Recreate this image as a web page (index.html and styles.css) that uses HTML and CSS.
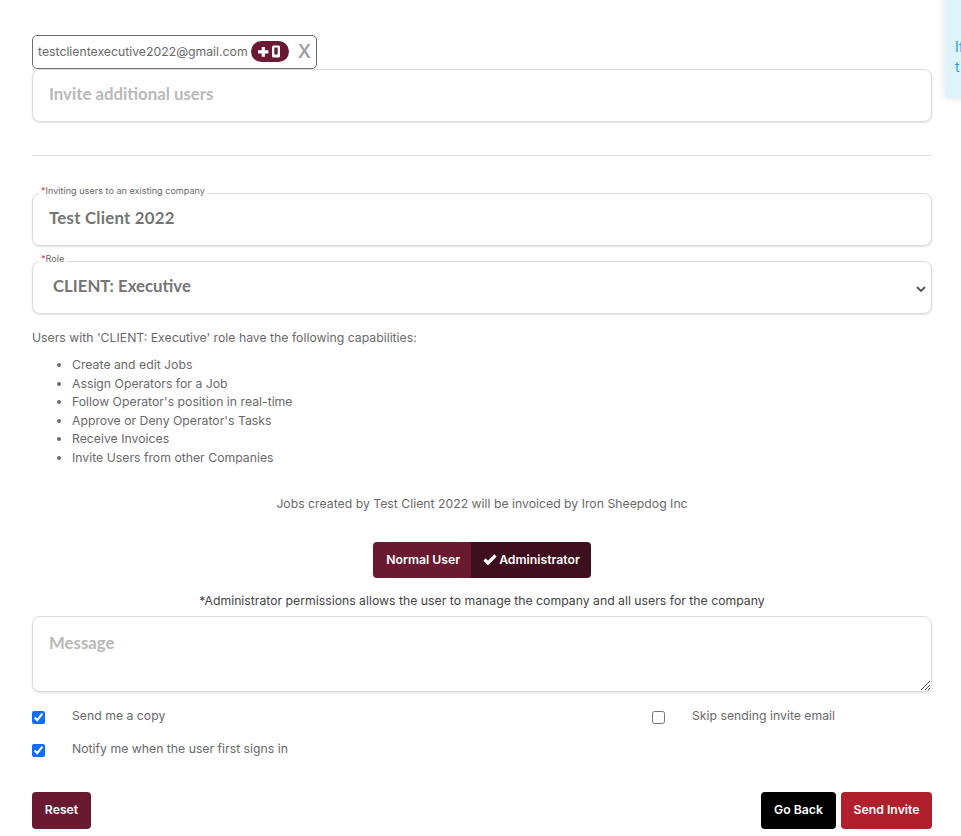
FILE: index.html
```html
<!DOCTYPE html>
<html lang="en">
<head>
<meta charset="utf-8">
<title>Invite users</title>
<link rel="stylesheet" href="styles.css">
</head>
<body>
<aside class="notice"><p>If</p><p>t</p></aside>
<main class="page">
  <div class="chip">
    <span class="chip-email">testclientexecutive2022@gmail.com</span>
    <span class="chip-badge">
      <svg width="30" height="16" viewBox="0 0 30 16"><path d="M6.700 3h3.200v3.200h3.500v3.200H9.900v3.300H6.700V9.400H3V6.200h3.700z" fill="#fff"/><path fill-rule="evenodd" d="M18.500 1.500h5a1.500 1.500 0 0 1 1.500 1.500v9a1.500 1.500 0 0 1-1.500 1.500h-5A1.500 1.500 0 0 1 17 12V3a1.500 1.500 0 0 1 1.500-1.500zm.8 2v7h3.400v-7z" fill="#fff"/></svg>
    </span>
    <span class="chip-x">X</span>
  </div>
  <div class="field field-first"><span class="placeholder">Invite additional users</span></div>
  <hr class="rule">
  <div class="field field-labelled">
    <span class="legend"><b>*</b>Inviting users to an existing company</span>
    <span class="value value-company">Test Client 2022</span>
  </div>
  <div class="field field-select">
    <span class="legend"><b>*</b>Role</span>
    <span class="value">CLIENT: Executive</span>
    <svg class="chevron" width="10" height="6" viewBox="0 0 10 6"><path d="M1 1l4 4 4-4" fill="none" stroke="#555" stroke-width="1.800"/></svg>
  </div>
  <p class="caps-intro">Users with 'CLIENT: Executive' role have the following capabilities:</p>
  <ul class="caps">
    <li>Create and edit Jobs</li>
    <li>Assign Operators for a Job</li>
    <li>Follow Operator's position in real-time</li>
    <li>Approve or Deny Operator's Tasks</li>
    <li>Receive Invoices</li>
    <li>Invite Users from other Companies</li>
  </ul>
  <p class="invoice-note">Jobs created by Test Client 2022 will be invoiced by Iron Sheepdog Inc</p>
  <div class="toggle-row">
    <div class="toggle">
      <span class="toggle-btn">Normal User</span>
      <span class="toggle-btn toggle-on"><svg width="14" height="11" viewBox="0 0 14 11"><path d="M1.500 5.500l3.500 3.500 7.500-7.500" fill="none" stroke="#fff" stroke-width="3.200"/></svg>Administrator</span>
    </div>
  </div>
  <p class="perm-note">*Administrator permissions allows the user to manage the company and all users for the company</p>
  <div class="field field-message">
    <span class="placeholder">Message</span>
    <svg class="grip" width="9" height="9" viewBox="0 0 9 9"><path d="M9 0L0 9M9 4L4 9M9 7L7 9" stroke="#555" stroke-width="1" fill="none"/></svg>
  </div>
  <div class="checks">
    <div class="check-col check-col-left">
      <label class="check"><input type="checkbox" checked><span>Send me a copy</span></label>
      <label class="check"><input type="checkbox" checked><span>Notify me when the user first signs in</span></label>
    </div>
    <div class="check-col">
      <label class="check"><input type="checkbox"><span>Skip sending invite email</span></label>
    </div>
  </div>
  <div class="actions">
    <button class="btn btn-maroon">Reset</button>
    <div class="actions-right">
      <button class="btn btn-black">Go Back</button>
      <button class="btn btn-red">Send Invite</button>
    </div>
  </div>
</main>
</body>
</html>
```
FILE: styles.css
```css
* { box-sizing: border-box; }
html, body { margin: 0; padding: 0; }
body {
  width: 961px;
  height: 836px;
  overflow: hidden;
  position: relative;
  background: #fff;
  color: #6a6a6a;
  font-family: Inter, "Liberation Sans", sans-serif;
  font-size: 12.250px;
}
.notice {
  position: absolute;
  left: 945px;
  top: -10px;
  width: 60px;
  height: 108px;
  background: #dff3fb;
  box-shadow: 0 0 8px rgba(0,0,0,.12);
  color: #1f9fe0;
  padding: 47px 0 0 10px;
  font-size: 14px;
  line-height: 20px;
}
.notice p { margin: 0; }
.page { width: 900px; margin-left: 32px; padding-top: 35px; }
.chip {
  width: 285px;
  height: 34px;
  border: 1px solid #6e6e6e;
  border-radius: 5px;
  display: flex;
  align-items: center;
  padding: 0 0 1px 5px;
  background: #fff;
}
.chip-email { color: #6a6a6a; }
.chip-badge {
  margin-left: 3px;
  width: 38px;
  height: 21px;
  border-radius: 11px;
  background: #691a30;
  display: flex;
  align-items: center;
  justify-content: center;
}
.chip-x { margin-left: 9px; font-size: 19px; color: #9a9a9a; font-weight: 500; }
.field {
  position: relative;
  width: 900px;
  height: 53px;
  border: 1px solid #dcdcdc;
  border-radius: 8px;
  box-shadow: 0 1px 2px rgba(0,0,0,.12);
  display: flex;
  align-items: center;
  padding: 0 0 4px 16px;
  font-family: Lato, "Open Sans", sans-serif;
  font-size: 16.800px;
  font-weight: 700;
  background: #fff;
}
.placeholder { color: #b9b9b9; }
.value { color: #757575; }
.value-company { letter-spacing: .25px; }
.rule { margin: 33px 0 37px; border: 0; border-top: 1px solid #e2e2e2; }
.legend {
  position: absolute;
  left: 6px;
  top: -10px;
  padding: 0 2px;
  background: #fff;
  font-family: Inter, sans-serif;
  font-size: 9.100px;
  font-weight: 400;
  line-height: 13px;
  color: #6a6a6a;
}
.legend b { color: #d0313d; font-weight: 400; }
.field-select { margin-top: 15px; padding-left: 20px; }
.chevron { position: absolute; right: 5px; top: 24px; }
.caps-intro { margin: 16px 0 0; line-height: 16px; }
.caps { margin: 10px 0 0; padding-left: 40px; line-height: 18.600px; }
.invoice-note { margin: 28px 0 0; text-align: center; line-height: 16px; }
.toggle-row { display: flex; justify-content: center; margin-top: 30px; }
.toggle { display: flex; height: 36px; border-radius: 4px; overflow: hidden; }
.toggle-btn {
  display: flex;
  align-items: center;
  justify-content: center;
  background: #691a30;
  color: #fff;
  font-size: 12.250px;
  font-weight: 600;
  padding: 0 11px 0 13px;
}
.toggle-on { background: #3e0e1e; gap: 2px; padding: 0 11px 0 12px; }
.perm-note { margin: 15px 0 0; text-align: center; line-height: 16px; color: #444; }
.field-message { margin-top: 7px; height: 76px; align-items: flex-start; padding: 15px 0 0 16px; }
.grip { position: absolute; right: 1px; bottom: 1px; }
.checks { display: flex; margin-top: 16px; }
.check-col { display: flex; flex-direction: column; gap: 14px; }
.check-col-left { width: 620px; }
.check { display: flex; align-items: flex-start; height: 19px; }
.check input { margin: 3px 27px 0 0; width: 13px; height: 13px; accent-color: #0d6efd; }
.check span { line-height: 16px; }
.actions { display: flex; justify-content: space-between; margin-top: 32px; }
.actions-right { display: flex; gap: 5px; }
.btn {
  width: 59px;
  height: 37px;
  border: 0;
  border-radius: 4px;
  color: #fff;
  font-family: Inter, sans-serif;
  font-size: 12.250px;
  font-weight: 600;
  padding: 0 0 2px;
}
.btn-maroon { background: #691a30; }
.btn-black { background: #000; width: 75px; }
.btn-red { background: #b01f2c; width: 91px; }
```
